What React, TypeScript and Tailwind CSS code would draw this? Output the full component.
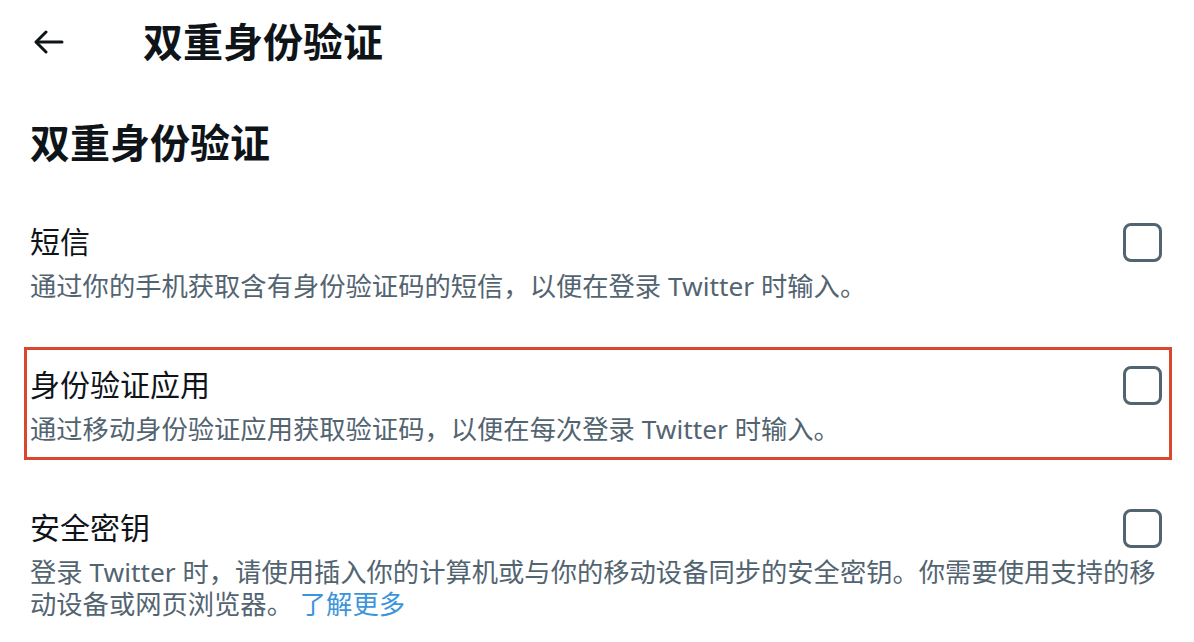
import React from 'react';

type Option = {
  title: string;
  desc: React.ReactNode;
  highlighted?: boolean;
};

const options: Option[] = [
  {
    title: '短信',
    desc: '通过你的手机获取含有身份验证码的短信，以便在登录 Twitter 时输入。',
  },
  {
    title: '身份验证应用',
    desc: '通过移动身份验证应用获取验证码，以便在每次登录 Twitter 时输入。',
    highlighted: true,
  },
  {
    title: '安全密钥',
    desc: (
      <>
        登录 Twitter 时，请使用插入你的计算机或与你的移动设备同步的安全密钥。你需要使用支持的移动设备或网页浏览器。{' '}
        <span className="cursor-pointer text-[#3d94db]">了解更多</span>
      </>
    ),
  },
];

function BackArrow() {
  return (
    <svg width="30" height="24" viewBox="0 0 30 24" fill="none" stroke="#0f1419" strokeWidth="3" strokeLinecap="round" strokeLinejoin="round">
      <path d="M28 12H3" />
      <path d="M12 2L2 12l10 10" />
    </svg>
  );
}

function OptionRow({ option }: { option: Option }) {
  return (
    <div className="relative">
      {/* red highlight frame sits over the row */}
      {option.highlighted && (
        <span className="pointer-events-none absolute -left-[6px] -right-[10px] -top-[17px] -bottom-[15px] border-[3px] border-[#d9472f]" />
      )}
      <div className="flex items-center justify-between">
        <span className="text-[30px] leading-[40px] text-[#0f1419]">{option.title}</span>
        <span className="mt-[2px] h-[39px] w-[39px] rounded-[8px] border-[3px] border-[#536471]" />
      </div>
      <p className="mt-[8px] text-[26.3px] leading-[32px] text-[#536471]">{option.desc}</p>
    </div>
  );
}

export default function App() {
  return (
    <div className="h-[642px] w-[1194px] overflow-hidden bg-white font-['Noto_Sans','Noto_Sans_CJK_SC',sans-serif]">
      <header className="flex h-[84px] items-center">
        <div className="flex w-[143px] pl-[34px]">
          <BackArrow />
        </div>
        <h1 className="text-[40px] font-bold leading-[48px] text-[#0f1419]">双重身份验证</h1>
      </header>

      <div className="pl-[30px] pr-[32px]">
        <h2 className="mt-[35px] text-[40px] font-bold leading-[48px] text-[#0f1419]">双重身份验证</h2>

        <div className="mt-[54px] flex flex-col gap-[62px]">
          {options.map((o) => (
            <OptionRow key={o.title} option={o} />
          ))}
        </div>
      </div>
    </div>
  );
}
